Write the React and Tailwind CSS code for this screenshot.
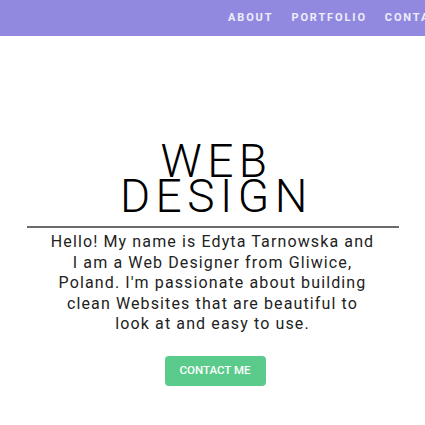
// App.jsx
function Nav() {
    return (
        <nav className="h-9 bg-[#9189e0] flex items-center overflow-hidden">
            <ul className="flex items-center gap-[18px] pl-[228px] whitespace-nowrap text-[11px] font-bold tracking-[0.17em] text-white/85">
                <li>ABOUT</li>
                <li>PORTFOLIO</li>
                <li>CONTACT</li>
            </ul>
        </nav>
    );
}

export default function App() {
    return (
        <div className="w-[425px] h-[425px] bg-white overflow-hidden font-['Roboto',sans-serif]">
            <Nav />

            {/* Hero */}
            <section className="flex flex-col items-center pt-[108px]">
                <h1 className="pl-[8px] text-center text-[46px] leading-[35px] font-light tracking-[0.12em] text-black">
                    WEB
                    <br />
                    DESIGN
                </h1>
                <hr className="w-[372px] mt-[12px] border-t-2 border-[#6b6b6b]" />
                <p className="mt-[4px] w-[326px] text-center text-[16px] leading-[20.5px] tracking-[0.07em] text-[#222]">
                    Hello! My name is Edyta Tarnowska and I am a Web Designer from Gliwice,
                    Poland. I'm passionate about building clean Websites that are beautiful to
                    look at and easy to use.
                </p>
                <button className="mt-[21px] ml-[5px] h-[30px] w-[101px] rounded bg-[#5bcb8b] text-white text-[11.5px] font-medium">
                    CONTACT ME
                </button>
            </section>
        </div>
    );
}
